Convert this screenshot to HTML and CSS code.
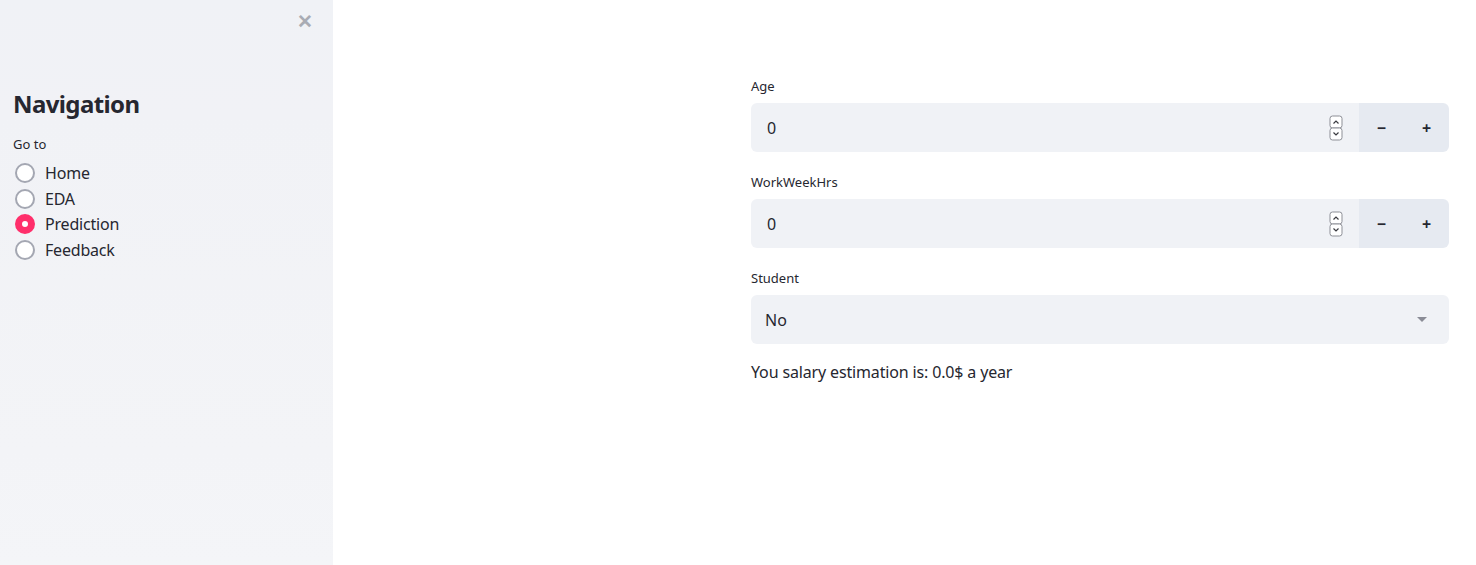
FILE: index.html
```html
<!DOCTYPE html>
<html>
<head>
<meta charset="utf-8">
<link rel="stylesheet" href="styles.css">
</head>
<body>
<div class="app">
  <aside class="sidebar">
    <div class="close-row"><span class="close">&#x2715;</span></div>
    <h1 class="nav-title">Navigation</h1>
    <div class="group-label">Go to</div>
    <div class="radios">
      <div class="radio"><span class="dot"></span><span>Home</span></div>
      <div class="radio"><span class="dot"></span><span>EDA</span></div>
      <div class="radio checked"><span class="dot"></span><span>Prediction</span></div>
      <div class="radio"><span class="dot"></span><span>Feedback</span></div>
    </div>
  </aside>
  <main class="main">
    <div class="content">
      <div class="field">
        <div class="label">Age</div>
        <div class="num-row">
          <div class="num-input"><span>0</span>
            <svg class="spin" width="14" height="26" viewBox="0 0 14 26"><rect x="1" y="1" width="12" height="12" rx="2.5" fill="#fff" stroke="#8d8f96"/><rect x="1" y="13" width="12" height="12" rx="2.5" fill="#fff" stroke="#8d8f96"/><path d="M4.5 8.5 L7 6 L9.5 8.5" fill="none" stroke="#3a3b40" stroke-width="1.2"/><path d="M4.5 17.5 L7 20 L9.5 17.5" fill="none" stroke="#3a3b40" stroke-width="1.2"/></svg>
          </div>
          <div class="step">&#x2212;</div><div class="step last">+</div>
        </div>
      </div>
      <div class="field">
        <div class="label">WorkWeekHrs</div>
        <div class="num-row">
          <div class="num-input"><span>0</span>
            <svg class="spin" width="14" height="26" viewBox="0 0 14 26"><rect x="1" y="1" width="12" height="12" rx="2.5" fill="#fff" stroke="#8d8f96"/><rect x="1" y="13" width="12" height="12" rx="2.5" fill="#fff" stroke="#8d8f96"/><path d="M4.5 8.5 L7 6 L9.5 8.5" fill="none" stroke="#3a3b40" stroke-width="1.2"/><path d="M4.5 17.5 L7 20 L9.5 17.5" fill="none" stroke="#3a3b40" stroke-width="1.2"/></svg>
          </div>
          <div class="step">&#x2212;</div><div class="step last">+</div>
        </div>
      </div>
      <div class="field final">
        <div class="label">Student</div>
        <div class="select"><span>No</span>
          <svg width="10" height="6" viewBox="0 0 10 6"><path d="M0 0 H10 L5 5 Z" fill="#8a8c96"/></svg>
        </div>
      </div>
      <p class="result">You salary estimation is: 0.0$ a year</p>
    </div>
  </main>
</div>
</body>
</html>
```
FILE: styles.css
```css
* { box-sizing: border-box; }
html, body { margin: 0; padding: 0; height: 100%; }
body {
  font-family: "Noto Sans", "Open Sans", sans-serif;
  color: #262730;
  background: #fff;
}
.app { display: flex; height: 565px; overflow: hidden; }
.sidebar {
  width: 333px;
  flex: none;
  background: linear-gradient(180deg, #f0f2f6 0%, #f1f2f6 20%, #f3f4f7 80%, #f4f5f8 100%);
  padding: 0 13px;
}
.close-row { display: flex; justify-content: flex-end; height: 42px; padding-top: 8px; padding-right: 7px; }
.close { color: #a9acb4; font-size: 19px; font-weight: 700; line-height: 26px; }
.nav-title {
  margin: 44px 0 0;
  font-size: 24px;
  font-weight: 700;
  line-height: 36px;
  letter-spacing: -0.6px;
}
.group-label { font-size: 13px; margin-top: 13px; line-height: 18px; }
.radios { margin-top: 7px; display: flex; flex-direction: column; }
.radio { display: flex; align-items: center; height: 25.7px; font-size: 16px; letter-spacing: -0.2px; }
.dot {
  width: 20px; height: 20px; border-radius: 50%;
  border: 2px solid #a4a7b2; background: #fff;
  margin-left: 2px; margin-right: 10px; flex: none;
}
.radio.checked .dot {
  border: 7px solid #ff2f6b;
  background: #fff;
}
.main { flex: 1; display: flex; justify-content: flex-end; padding: 78px 27px 0 0; }
.content { width: 698px; }
.field { margin-bottom: 22px; }
.field.final { margin-bottom: 16px; }
.label { font-size: 13px; line-height: 16px; margin-bottom: 9px; }
.num-row { display: flex; height: 49px; border-radius: 6px; overflow: hidden; }
.num-input {
  flex: 1; background: #f0f2f6;
  display: flex; align-items: center; justify-content: space-between;
  padding: 0 16px 0 16px; font-size: 16px;
}
.spin { display: block; }
.step {
  width: 45px; background: #e6eaf1;
  display: flex; align-items: center; justify-content: center;
  font-size: 16px; font-weight: 700;
}
.select {
  height: 49px; background: #f0f2f6; border-radius: 6px;
  display: flex; align-items: center; justify-content: space-between;
  padding: 0 22px 0 14px; font-size: 16px;
}
.result { margin: 0; font-size: 16px; line-height: 24px; letter-spacing: -0.15px; }
```
